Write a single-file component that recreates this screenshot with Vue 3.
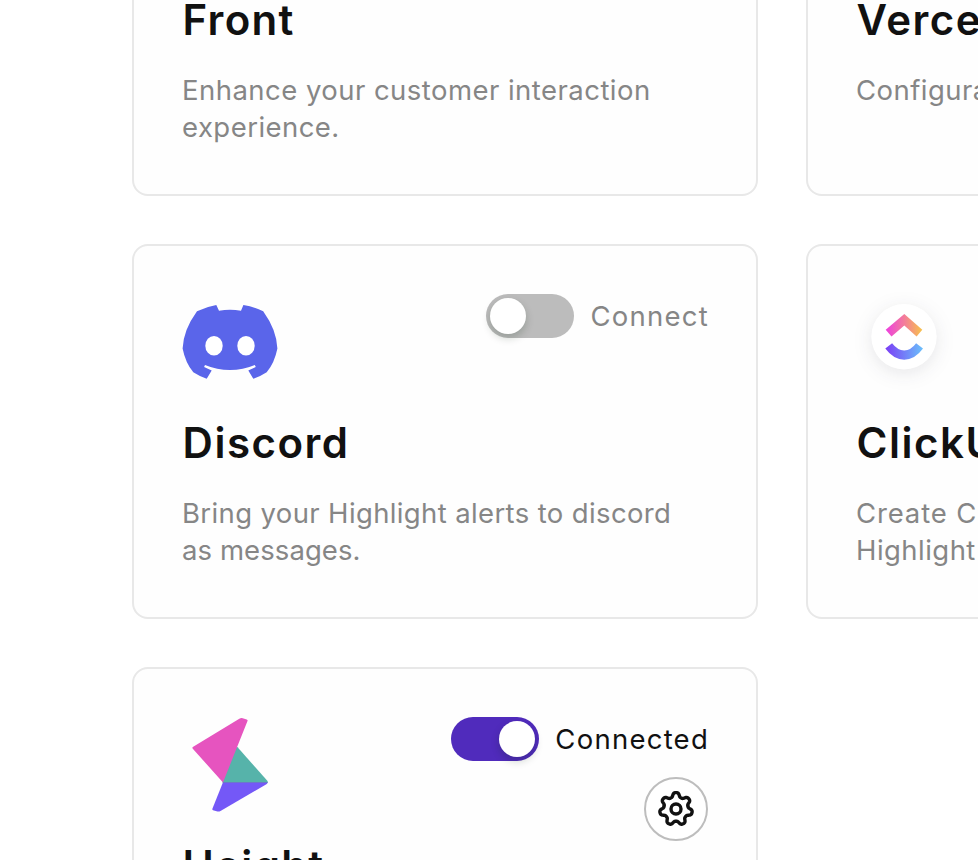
<script setup>
const cards = [
  { id: 'front', title: 'Front', lines: ['Enhance your customer interaction', 'experience.'] },
  { id: 'vercel', title: 'Vercel', lines: ['Configuration', '\u00a0'] },
  { id: 'discord', title: 'Discord', lines: ['Bring your Highlight alerts to discord', 'as messages.'], label: 'Connect' },
  { id: 'clickup', title: 'ClickUp', lines: ['Create ClickUp', 'Highlight'] },
  { id: 'height', title: 'Height', lines: [], label: 'Connected', on: true },
]

// Seven-toothed gear outline around the origin
const gear = (() => {
  const pts = []
  for (let i = 0; i < 210; i++) {
    const t = (i / 210) * Math.PI * 2
    const wave = Math.tanh(1.5 * Math.cos(7 * t)) / Math.tanh(1.5)
    const r = 14.3 + 2.1 * wave
    pts.push(`${(r * Math.sin(t)).toFixed(2)},${(-r * Math.cos(t)).toFixed(2)}`)
  }
  return pts.join(' ')
})()
</script>

<template>
  <main class="page">
    <div class="grid">
      <article v-for="card in cards" :key="card.id" class="card" :class="card.id">
        <header class="top">
          <svg v-if="card.id === 'discord'" class="logo" viewBox="0 0 96 96">
            <path fill="#5a65ea" d="M15 17.2Q24 12.8 34.3 11L37 16.7Q48 14.8 59 16.7L61.4 11Q72 12.8 81.2 17.2Q94.7 36 95.4 54.5Q92.5 69 84.7 78.3Q78.5 82.4 71.3 84.7L66.3 76.5L73.8 72.9L72.8 71Q61 76 48 76Q35 76 23 71L22.1 72.9L29.7 76.5L24.7 84.7Q17.5 82.4 11.3 78.3Q3.5 69 .6 54.5Q1.3 36 15 17.2Z" />
            <ellipse cx="32" cy="51.7" rx="8.7" ry="9.8" fill="#fff" />
            <ellipse cx="64" cy="51.7" rx="8.7" ry="9.8" fill="#fff" />
          </svg>
          <svg v-else-if="card.id === 'clickup'" class="logo" viewBox="0 0 96 96">
            <defs>
              <linearGradient id="roof"><stop offset="0" stop-color="#ed3fe0" /><stop offset=".5" stop-color="#f37b9b" /><stop offset="1" stop-color="#f7c34b" /></linearGradient>
              <linearGradient id="bowl"><stop offset="0" stop-color="#7b3df5" /><stop offset="1" stop-color="#6bc0fb" /></linearGradient>
            </defs>
            <circle class="disc" cx="48" cy="42.8" r="32.7" fill="#fff" />
            <path fill="url(#roof)" d="M48.3 20L66.3 35.8L60.6 42.4L48.3 31.6L35.5 42.4L29.7 35.8Z" />
            <path fill="url(#bowl)" d="M29.3 54.6L36.1 49.3Q41.5 56.4 48.2 56.4Q55 56.4 60.1 49.3L67 54.6Q59 65.7 48.2 65.7Q37.5 65.7 29.3 54.6Z" />
          </svg>
          <svg v-else-if="card.id === 'height'" class="logo" viewBox="0 0 96 96">
            <path fill="#56b3aa" d="M55.6 30.3L85.3 63.8Q86.3 65 85 66.2H40.8L40.4 63L54.6 29.6Z" />
            <path fill="#7458f7" d="M40.8 65.8H85.6Q85.4 66.5 84.4 67.2L38.5 94Q37 94.8 35.5 94.5L31 93.2Q30 92.8 30.4 91.8Z" />
            <path fill="#6b79c9" d="M41 65H85.7V66H40.7Z" />
            <path fill="#e654bf" d="M41 65.4L10.8 31.8Q9.8 30.6 11.2 29.7L57.3 1.7Q59 .8 60.7 1.2L64.7 2.4Q66 2.8 65.5 4Z" />
          </svg>
          <div v-if="card.label" class="controls">
            <div class="toggle" :class="{ on: card.on }">
              <span class="switch"><span class="knob"></span></span>
              <span class="label">{{ card.label }}</span>
            </div>
            <button v-if="card.on" class="settings">
              <svg viewBox="-20 -20 40 40">
                <polygon :points="gear" />
                <circle r="5" />
              </svg>
            </button>
          </div>
        </header>
        <h2>{{ card.title }}</h2>
        <p><span v-for="line in card.lines" :key="line">{{ line }}</span></p>
      </article>
    </div>
  </main>
</template>

<style>
body { background: #fff; }
</style>

<style scoped>
.page {
  height: 860px;
  overflow: hidden;
  font-family: Inter, "Liberation Sans", sans-serif;
  color: #111;
}
.grid {
  display: grid;
  grid-template-columns: 626px 626px;
  grid-auto-rows: 375px;
  gap: 48px;
  margin: -179px 0 0 132px;
}
.card {
  box-sizing: border-box;
  padding: 48px;
  border: 2px solid #e8e8e8;
  border-radius: 16px;
  background: #fefefe;
}
.top {
  display: flex;
  justify-content: space-between;
  height: 96px;
}
.logo { width: 96px; height: 96px; overflow: visible; }
.disc { filter: drop-shadow(0 4px 9px rgba(25, 30, 50, 0.1)); }
.controls {
  display: flex;
  flex-direction: column;
  align-items: flex-end;
  gap: 16px;
}
.toggle { display: flex; align-items: center; }
.switch {
  box-sizing: border-box;
  display: flex;
  width: 88px;
  height: 44px;
  padding: 4px;
  border-radius: 22px;
  background: #bcbcbc;
}
.knob {
  width: 36px;
  height: 36px;
  border-radius: 50%;
  background: #fff;
  box-shadow: 0 4px 8px rgba(0, 35, 11, 0.2);
}
.on .switch { justify-content: flex-end; background: #502bbc; }
.label {
  margin: 0 -1px 0 16px;
  font-size: 27.5px;
  line-height: 44px;
  letter-spacing: 1.25px;
  color: #868686;
}
.on .label { color: #111; }
.settings {
  display: grid;
  flex: none;
  place-items: center;
  box-sizing: border-box;
  width: 64px;
  height: 64px;
  padding: 0;
  border: 2px solid #bdbdbd;
  border-radius: 50%;
  background: #fff;
}
.settings svg {
  width: 40px;
  height: 40px;
  fill: none;
  stroke: #111;
  stroke-width: 3.4;
  stroke-linejoin: round;
}
h2 {
  margin: 28px 0 27px;
  padding-left: 0.6px;
  font-size: 42px;
  line-height: 50px;
  font-weight: 600;
  letter-spacing: 1.5px;
  white-space: nowrap;
}
.front h2, .height h2 { letter-spacing: 1.3px; }
p {
  margin: 0;
  font-size: 27.5px;
  line-height: 37px;
  letter-spacing: 0.46px;
  color: #868686;
  white-space: nowrap;
}
p span { display: block; }
.discord p { letter-spacing: 0.37px; }
.discord p span:last-child { letter-spacing: 0.08px; }
.clickup p span:first-child { letter-spacing: 0.85px; }
</style>
